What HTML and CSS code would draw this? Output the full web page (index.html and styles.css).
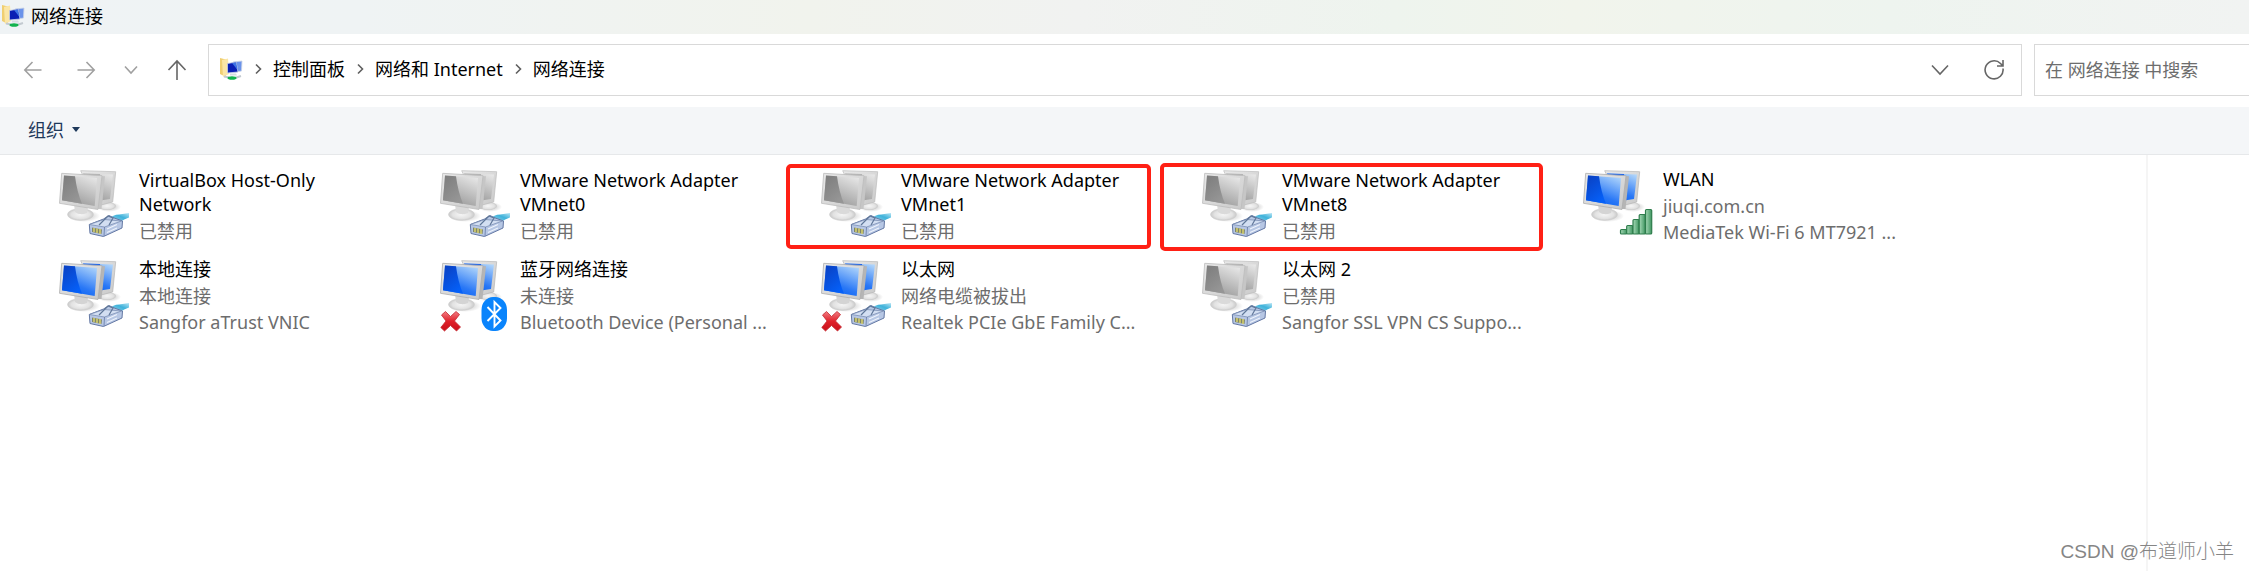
FILE: index.html
```html
<!DOCTYPE html>
<html lang="zh-CN">
<head>
    <meta charset="UTF-8">
    <title>网络连接</title>
    <link rel="stylesheet" href="styles.css">
</head>
<body>
    <!-- shared icon parts -->
    <svg class="defs" width="0" height="0" aria-hidden="true">
        <defs>
            <linearGradient id="frame" x1="0" y1="0" x2="1" y2="1">
                <stop offset="0" stop-color="#e9e9e9"/>
                <stop offset="1" stop-color="#c9c9c9"/>
            </linearGradient>
            <linearGradient id="blue-dark" x1="0" y1="0" x2="0.6" y2="1">
                <stop offset="0" stop-color="#0a3fc0"/>
                <stop offset="1" stop-color="#0560f8"/>
            </linearGradient>
            <linearGradient id="blue-light" x1="0.9" y1="0" x2="0.4" y2="1">
                <stop offset="0" stop-color="#b4d8fb"/>
                <stop offset="0.7" stop-color="#2a78f6"/>
                <stop offset="1" stop-color="#0a63f5"/>
            </linearGradient>
            <linearGradient id="gray-dark" x1="0" y1="0" x2="0.6" y2="1">
                <stop offset="0" stop-color="#7c7c7c"/>
                <stop offset="1" stop-color="#969696"/>
            </linearGradient>
            <linearGradient id="gray-light" x1="0.9" y1="0" x2="0.4" y2="1">
                <stop offset="0" stop-color="#e9e9e9"/>
                <stop offset="1" stop-color="#9a9a9a"/>
            </linearGradient>
            <radialGradient id="foot">
                <stop offset="0" stop-color="#f6f6f6"/>
                <stop offset="0.7" stop-color="#e2e2e2"/>
                <stop offset="1" stop-color="#c8c8c8"/>
            </radialGradient>
            <radialGradient id="shadow">
                <stop offset="0" stop-color="#8c8c8c" stop-opacity="0.6"/>
                <stop offset="1" stop-color="#8c8c8c" stop-opacity="0"/>
            </radialGradient>
            <linearGradient id="cable" x1="0" y1="1" x2="1" y2="0">
                <stop offset="0" stop-color="#9fdcf0"/>
                <stop offset="0.6" stop-color="#3fb2da"/>
                <stop offset="1" stop-color="#b9e6f5"/>
            </linearGradient>
            <linearGradient id="bar" x1="0" y1="0" x2="1" y2="0">
                <stop offset="0" stop-color="#a5d9b6"/>
                <stop offset="1" stop-color="#3f9560"/>
            </linearGradient>
            <linearGradient id="cross" x1="0" y1="0" x2="0" y2="1">
                <stop offset="0" stop-color="#f27c82"/>
                <stop offset="0.5" stop-color="#e0222b"/>
                <stop offset="1" stop-color="#c8101a"/>
            </linearGradient>

            <symbol id="pc-on" viewBox="0 0 72 76">
                <ellipse cx="50" cy="39" rx="12" ry="5" fill="url(#shadow)"/>
                <ellipse cx="48" cy="38" rx="9" ry="4" fill="url(#foot)"/>
                <path d="M21.700 2.700 56.700 3.700 53.700 34 38 38z" fill="url(#frame)" stroke="#b4b4b4" stroke-width="0.700"/>
                <path d="M24 5.500 54 6.500 51 31 38 33z" fill="url(#blue-light)"/>
                <path d="M24 5.500 41 6 44 32 38 33z" fill="#2166e8"/>
                <path d="M42 8 46 8.200 42.500 41 38.500 41z" fill="#b5b5b5"/>
                <ellipse cx="25" cy="48" rx="16" ry="6" fill="url(#shadow)"/>
                <ellipse cx="21.500" cy="46.500" rx="13" ry="6" fill="url(#foot)" stroke="#d0d0d0" stroke-width="0.500"/>
                <path d="M15 36 29 39 28 45Q21 48 16 44z" fill="#d4d4d4"/>
                <path d="M2.700 5.300 43 7.700 39 41.500 0.500 35.300z" fill="url(#frame)" stroke="#adadad" stroke-width="0.800"/>
                <path d="M5 7.500 38 10 35.700 38 3 32.300z" fill="url(#blue-light)"/>
                <path d="M5 7.500 16 8.300Q18 24 23 35.800L3 32.300z" fill="url(#blue-dark)"/>
            </symbol>

            <symbol id="pc-off" viewBox="0 0 72 76">
                <ellipse cx="50" cy="39" rx="12" ry="5" fill="url(#shadow)"/>
                <ellipse cx="48" cy="38" rx="9" ry="4" fill="url(#foot)"/>
                <path d="M21.700 2.700 56.700 3.700 53.700 34 38 38z" fill="url(#frame)" stroke="#bcbcbc" stroke-width="0.700"/>
                <path d="M24 5.500 54 6.500 51 31 38 33z" fill="url(#gray-light)"/>
                <path d="M24 5.500 41 6 44 32 38 33z" fill="#b4b4b4"/>
                <path d="M42 8 46 8.200 42.500 41 38.500 41z" fill="#c6c6c6"/>
                <ellipse cx="25" cy="48" rx="16" ry="6" fill="url(#shadow)"/>
                <ellipse cx="21.500" cy="46.500" rx="13" ry="6" fill="url(#foot)" stroke="#d0d0d0" stroke-width="0.500"/>
                <path d="M15 36 29 39 28 45Q21 48 16 44z" fill="#dadada"/>
                <path d="M2.700 5.300 43 7.700 39 41.500 0.500 35.300z" fill="url(#frame)" stroke="#bcbcbc" stroke-width="0.800"/>
                <path d="M5 7.500 38 10 35.700 38 3 32.300z" fill="url(#gray-light)"/>
                <path d="M5 7.500 16 8.300Q18 24 23 35.800L3 32.300z" fill="url(#gray-dark)"/>
            </symbol>

            <symbol id="plug" viewBox="0 0 72 76">
                <path d="M50 51Q54 46.500 60 46.500L70 45 70 49.500Q66 50.500 61 54z" fill="url(#cable)"/>
                <path d="M30.300 56.500 44.500 51 50 47.500 54 49.500 63.500 53 63 60 44.500 68.500 31 65.500z" fill="#b7c7e4" stroke="#6478a4" stroke-width="1" stroke-linejoin="round"/>
                <path d="M30.300 56.500 45 51.500 62.500 53 45.500 59z" fill="#d3dff2" stroke="#7386ae" stroke-width="0.700"/>
                <path d="M45.500 59 45 68" stroke="#6478a4" stroke-width="0.800"/>
                <path d="M40 57 49 48 54 50 50 57" fill="none" stroke="#5f7698" stroke-width="1.200"/>
                <path d="M33 59.500 43 61.500 42.500 66 33 64z" fill="#7f8569"/>
                <path d="M35 60v4M38 60.500v4.500M41 61v5" stroke="#e6df71" stroke-width="1.300"/>
                <path d="M48 61 58 56.500M48 64.500 58 60" stroke="#eef3fc" stroke-width="1.200"/>
            </symbol>

            <symbol id="unplugged" viewBox="0 0 72 76">
                <path d="M1.500 57 5.500 53.500 10.500 58.500 16 53.500 19.500 56.500 14.500 63 20.500 69 16.500 73 10.500 67.500 4.500 73 0.800 69.500 6 63z" fill="url(#cross)" stroke="#c42a31" stroke-width="0.800" stroke-linejoin="round"/>
            </symbol>

            <symbol id="bluetooth" viewBox="0 0 72 76">
                <rect x="41.500" y="39" width="25.500" height="34" rx="11.500" ry="13" fill="#0a84fc"/>
                <path d="M47.500 49 60.500 62.500 54.500 68.500V44L60.500 50 47.500 63" fill="none" stroke="#fff" stroke-width="1.900"/>
            </symbol>

            <symbol id="signal" viewBox="0 0 72 76">
                <g fill="url(#bar)" stroke="#2e7d4c" stroke-width="1.200">
                    <rect x="37.500" y="61.500" width="6.200" height="4.500" rx="1"/>
                    <rect x="43.700" y="57.500" width="6.200" height="8.500" rx="1"/>
                    <rect x="50" y="51.500" width="6.200" height="14.500" rx="1"/>
                    <rect x="56.200" y="46.500" width="6.200" height="19.500" rx="1"/>
                    <rect x="62.500" y="41.500" width="6.200" height="24.500" rx="1"/>
                </g>
            </symbol>

            <symbol id="folder" viewBox="0 0 24 24">
                <path d="M1 1 7 2.500V20L1 17z" fill="#f0cf72"/>
                <path d="M3 3 9 1.500 10 17 4 20z" fill="#fbe6a6"/>
                <path d="M14 5 23 4 22.500 14 16 15z" fill="#6b93ea" stroke="#c9d3e6" stroke-width="0.800"/>
                <path d="M8.500 6.500 17 5 19 15 8.500 16z" fill="#0a1fb4" stroke="#c9d3e6" stroke-width="0.800"/>
                <path d="M13 6 17 5.500 18.500 13z" fill="#3d74e6"/>
                <path d="M5 19.500 10 20.500M16 21 22 19" stroke="#c3cad0" stroke-width="2"/>
                <ellipse cx="13" cy="21" rx="4.500" ry="1.800" fill="#12b34e"/>
                <path d="M11 16.500h6l1 2h-7z" fill="#d6dde2"/>
            </symbol>

            <symbol id="sep" viewBox="0 0 10 12">
                <path d="M3 1.500 7.500 6 3 10.500" fill="none" stroke="#5f5f5f" stroke-width="1.600"/>
            </symbol>
        </defs>
    </svg>

    <header class="titlebar">
        <svg class="folder-icon" aria-hidden="true"><use href="#folder"/></svg>
        <h1>网络连接</h1>
    </header>

    <div class="navbar">
        <nav class="history">
            <button type="button" aria-label="后退" class="nav-btn">
                <svg width="20" height="20" viewBox="0 0 20 20"><path d="M18.500 10H2M9.500 2 1.800 10 9.500 18"/></svg>
            </button>
            <button type="button" aria-label="前进" class="nav-btn">
                <svg width="20" height="20" viewBox="0 0 20 20"><path d="M1.500 10H18M10.500 2 18.200 10 10.500 18"/></svg>
            </button>
            <button type="button" aria-label="最近的位置" class="nav-btn recent">
                <svg width="14" height="20" viewBox="0 0 14 20"><path d="M1 6.500 7 13 13 6.500"/></svg>
            </button>
            <button type="button" aria-label="上移" class="nav-btn up">
                <svg width="20" height="22" viewBox="0 0 20 22"><path d="M10 21V2.500M1.500 11 10 2 18.500 11"/></svg>
            </button>
        </nav>

        <div class="address">
            <svg class="folder-icon" aria-hidden="true"><use href="#folder"/></svg>
            <svg class="sep" aria-hidden="true"><use href="#sep"/></svg>
            <button type="button" class="crumb">控制面板</button>
            <svg class="sep" aria-hidden="true"><use href="#sep"/></svg>
            <button type="button" class="crumb">网络和 Internet</button>
            <svg class="sep" aria-hidden="true"><use href="#sep"/></svg>
            <button type="button" class="crumb">网络连接</button>
            <div class="address-tools">
                <button type="button" aria-label="以前的位置" class="tool-btn">
                    <svg width="20" height="20" viewBox="0 0 20 20"><path d="M2 6.500 10 15 18 6.500"/></svg>
                </button>
                <button type="button" aria-label="刷新" class="tool-btn">
                    <svg width="22" height="22" viewBox="0 0 22 22"><path d="M20 10.500A9 9 0 1 1 17.500 5.500L19.500 7.500M20 2V8H14"/></svg>
                </button>
            </div>
        </div>

        <input type="search" class="search" placeholder="在 网络连接 中搜索" aria-label="在 网络连接 中搜索">
    </div>

    <div class="toolbar">
        <button type="button" class="organize">组织 <span class="caret"></span></button>
    </div>

    <main class="content">
        <ul class="connections">
            <li class="connection">
                <svg class="icon" aria-hidden="true"><use href="#pc-off"/><use href="#plug"/></svg>
                <div class="info">
                    <h2>VirtualBox Host-Only Network</h2>
                    <p>已禁用</p>
                </div>
            </li>
            <li class="connection">
                <svg class="icon" aria-hidden="true"><use href="#pc-off"/><use href="#plug"/></svg>
                <div class="info">
                    <h2>VMware Network Adapter VMnet0</h2>
                    <p>已禁用</p>
                </div>
            </li>
            <li class="connection marked vmnet1">
                <svg class="icon" aria-hidden="true"><use href="#pc-off"/><use href="#plug"/></svg>
                <div class="info">
                    <h2>VMware Network Adapter VMnet1</h2>
                    <p>已禁用</p>
                </div>
            </li>
            <li class="connection marked vmnet8">
                <svg class="icon" aria-hidden="true"><use href="#pc-off"/><use href="#plug"/></svg>
                <div class="info">
                    <h2>VMware Network Adapter VMnet8</h2>
                    <p>已禁用</p>
                </div>
            </li>
            <li class="connection">
                <svg class="icon" aria-hidden="true"><use href="#pc-on"/><use href="#signal"/></svg>
                <div class="info">
                    <h2>WLAN</h2>
                    <p>jiuqi.com.cn</p>
                    <p>MediaTek Wi-Fi 6 MT7921 ...</p>
                </div>
            </li>
            <li class="connection">
                <svg class="icon" aria-hidden="true"><use href="#pc-on"/><use href="#plug"/></svg>
                <div class="info">
                    <h2>本地连接</h2>
                    <p>本地连接</p>
                    <p>Sangfor aTrust VNIC</p>
                </div>
            </li>
            <li class="connection">
                <svg class="icon" aria-hidden="true"><use href="#pc-on"/><use href="#bluetooth"/><use href="#unplugged"/></svg>
                <div class="info">
                    <h2>蓝牙网络连接</h2>
                    <p>未连接</p>
                    <p>Bluetooth Device (Personal ...</p>
                </div>
            </li>
            <li class="connection">
                <svg class="icon" aria-hidden="true"><use href="#pc-on"/><use href="#plug"/><use href="#unplugged"/></svg>
                <div class="info">
                    <h2>以太网</h2>
                    <p>网络电缆被拔出</p>
                    <p>Realtek PCIe GbE Family C...</p>
                </div>
            </li>
            <li class="connection">
                <svg class="icon" aria-hidden="true"><use href="#pc-off"/><use href="#plug"/></svg>
                <div class="info">
                    <h2>以太网 2</h2>
                    <p>已禁用</p>
                    <p>Sangfor SSL VPN CS Suppo...</p>
                </div>
            </li>
        </ul>
        <aside class="preview"></aside>
        <p class="watermark">CSDN @布道师小羊</p>
    </main>
</body>
</html>
```
FILE: styles.css
```css
*,
*::after {
    box-sizing: border-box;
}

body {
    margin: 0;
    min-height: 100vh;
    display: flex;
    flex-direction: column;
    background: #fff;
    color: #000;
    font-family: "Noto Sans", "Noto Sans CJK SC", sans-serif;
    font-size: 18px;
    line-height: 24px;
}

h1, h2, p, ul {
    margin: 0;
    padding: 0;
    font-size: inherit;
    font-weight: normal;
}

button {
    border: none;
    padding: 0;
    background: none;
    color: inherit;
    font: inherit;
}

svg {
    flex: none;
}

.defs {
    position: absolute;
}

.folder-icon {
    width: 24px;
    height: 24px;
}

/* title bar */
.titlebar {
    display: flex;
    align-items: center;
    gap: 6px;
    height: 34px;
    padding: 0 0 2px 1px;
    background: linear-gradient(90deg, #eff3f5 0%, #eff3f4 16%, #f1f3ed 36%, #f1f2f1 48%, #eef4ee 62%, #f1f4ec 70%, #eef4ef 84%, #f1f3f2 100%);
}

/* navigation row */
.navbar {
    display: flex;
    align-items: center;
    height: 73px;
    padding-bottom: 1px;
}

.history {
    display: flex;
    align-items: center;
    width: 208px;
    padding-left: 23px;
}

.nav-btn {
    display: flex;
    margin-right: 33px;
}

.nav-btn.recent {
    margin-left: -5px;
    margin-right: 29px;
}

.nav-btn.up {
    margin: 0;
}

.nav-btn path,
.tool-btn path {
    fill: none;
    stroke: #a0a0a0;
    stroke-width: 1.6;
}

.nav-btn.up path,
.tool-btn path {
    stroke: #666;
}

.address {
    flex: 1;
    display: flex;
    align-items: center;
    height: 52px;
    padding: 0 16px 2px 10px;
    border: 1px solid #d9d9d9;
}

.sep {
    width: 10px;
    height: 12px;
    margin: 0 10px;
}

.address-tools {
    display: flex;
    align-items: center;
    gap: 33px;
    margin-left: auto;
}

.tool-btn {
    display: flex;
}

.search {
    width: 215px;
    height: 52px;
    margin-left: 12px;
    padding: 0 10px;
    border: 1px solid #d9d9d9;
    border-right: none;
    border-radius: 0;
    outline: none;
    background: #fff;
    font: inherit;
}

.search::placeholder {
    color: #6d6d6d;
    opacity: 1;
}

/* command bar */
.toolbar {
    display: flex;
    align-items: center;
    height: 48px;
    padding: 0 0 2px 28px;
    background: #f4f6f8;
    border-bottom: 1px solid #e6e8ea;
}

.organize {
    display: flex;
    align-items: center;
    gap: 8px;
    color: #1e395b;
}

.caret {
    border: 4px solid transparent;
    border-top: 5px solid #1e395b;
    border-bottom: none;
}

/* connection list */
.content {
    position: relative;
    flex: 1;
    display: flex;
}

.connections {
    flex: 1;
    display: grid;
    grid-template-columns: repeat(auto-fill, 381px);
    grid-auto-rows: 90px;
    padding: 6px 0 0 59px;
    list-style: none;
}

.connection {
    position: relative;
    display: flex;
    align-items: center;
    gap: 8px;
}

.icon {
    width: 72px;
    height: 76px;
}

.info {
    width: 240px;
}

.info p {
    line-height: 26px;
    color: #6d6d6d;
    white-space: nowrap;
}

.info h2 {
    margin-bottom: 2px;
}

/* red marker boxes drawn over the list */
.marked::after {
    content: "";
    position: absolute;
    border: 4px solid #ff2015;
    border-radius: 5px;
}

.vmnet1::after {
    top: 3px;
    left: -35px;
    width: 365px;
    height: 85px;
}

.vmnet8::after {
    top: 2px;
    left: -42px;
    width: 383px;
    height: 88px;
}

.preview {
    width: 103px;
    border-left: 2px solid #f5f5f5;
}

.watermark {
    position: absolute;
    right: 15px;
    bottom: 7px;
    color: #858585;
    font-family: "Liberation Sans", "Noto Sans CJK SC", sans-serif;
    font-size: 19px;
    font-weight: 300;
}
```
